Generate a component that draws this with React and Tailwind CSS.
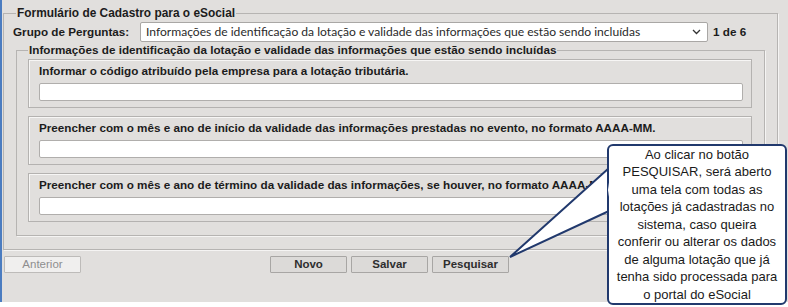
import React from 'react';

// Caixa de pergunta com rótulo e campo de texto
const QuestionBox = ({ label }) => (
  <div className="border border-[#b4b2b0] shadow-[inset_1px_1px_0_#f7f6f5] pl-[10px] pr-[8px] pt-[4px] pb-[6px]">
    <div className="h-[14px] leading-[14px] text-[11.7px] font-bold text-[#1c1c1c] mb-[5px] whitespace-nowrap">{label}</div>
    <div className="h-[18px] bg-white border border-[#b0aeac] rounded-[2px]" />
  </div>
);

const Button = ({ children, disabled, className = '' }) => (
  <div
    className={
      'h-[17px] w-[77px] flex items-center justify-center text-[11.5px] font-bold border rounded-[1px] ' +
      (disabled
        ? 'bg-[#f0efee] border-[#bdbbb9] text-[#8e8e8e] font-normal '
        : 'bg-[#dcdad8] border-[#a8a6a4] text-[#2e2e2e] ') +
      className
    }
  >
    {children}
  </div>
);

export default function App() {
  return (
    <div className="w-[788px] h-[307px] bg-white relative overflow-hidden font-['Liberation_Sans',Arial,sans-serif]">
      {/* Painel cinza */}
      <div className="h-[302px] w-[788px] bg-[#e1dfdd] border-l-2 border-[#4b7cc0] pl-[1px] pt-[6px]">
        <fieldset className="w-[775px] border border-[#b6b4b2] shadow-[1px_1px_0_#f5f4f3] px-[12px] pb-[13px]">
          <legend className="px-[1px] text-[11.9px] font-bold leading-[14px] text-[#1c1c1c]">
            Formulário de Cadastro para o eSocial
          </legend>

          {/* Grupo de perguntas */}
          <div className="flex items-center mt-[2px] -ml-[3px]">
            <span className="w-[127px] text-[11.7px] font-bold text-[#1c1c1c]">Grupo de Perguntas:</span>
            <div className="w-[568px] h-[20px] bg-white border border-[#a9a7a5] rounded-[2px] flex items-center pl-[5px] pr-[6px]">
              <span className="flex-1 text-[12.1px] text-[#2a2a2a] font-['Lato',sans-serif] whitespace-nowrap overflow-hidden">
                Informações de identificação da lotação e validade das informações que estão sendo incluídas
              </span>
              <svg width="9" height="6" viewBox="0 0 9 6">
                <path d="M1 1 L4.5 4.5 L8 1" fill="none" stroke="#333" strokeWidth="1.3" />
              </svg>
            </div>
            <span className="ml-[5px] text-[11.7px] font-bold text-[#1c1c1c]">1 de 6</span>
          </div>

          <fieldset className="mt-[1px] border border-[#b6b4b2] shadow-[1px_1px_0_#f5f4f3] pl-[11px] pr-[12px] pb-[13px]">
            <legend className="px-[1px] text-[11.7px] font-bold leading-[14px] text-[#1c1c1c]">
              Informações de identificação da lotação e validade das informações que estão sendo incluídas
            </legend>
            <div className="flex flex-col gap-[8px] mt-[2px]">
              <QuestionBox label="Informar o código atribuído pela empresa para a lotação tributária." />
              <QuestionBox label="Preencher com o mês e ano de início da validade das informações prestadas no evento, no formato AAAA-MM." />
              <QuestionBox label="Preencher com o mês e ano de término da validade das informações, se houver, no formato AAAA-MM." />
            </div>
          </fieldset>
        </fieldset>

        {/* Botões */}
        <div className="flex items-center mt-[6px] pl-[1px]">
          <Button disabled>Anterior</Button>
          <div className="flex gap-[4px] ml-[189px]">
            <Button>Novo</Button>
            <Button>Salvar</Button>
            <Button>Pesquisar</Button>
          </div>
        </div>
      </div>

      {/* Balão explicativo */}
      <svg className="absolute left-0 top-0 pointer-events-none" width="788" height="307">
        <path d="M609 168 L510 257 L609 211" fill="#ffffff" stroke="#21396d" strokeWidth="2" strokeLinejoin="miter" />
      </svg>
      <div className="absolute left-[607px] top-[144px] w-[180px] h-[161px] bg-white border-2 border-[#21396d] rounded-[6px] flex flex-col items-center justify-center text-[13px] leading-[17.5px] text-[#1a1a1a] text-center">
        <span>Ao clicar no botão</span>
        <span>PESQUISAR, será aberto</span>
        <span>uma tela com todas as</span>
        <span>lotações já cadastradas no</span>
        <span>sistema, caso queira</span>
        <span>conferir ou alterar os dados</span>
        <span>de alguma lotação que já</span>
        <span>tenha sido processada para</span>
        <span>o portal do eSocial</span>
      </div>
      <svg className="absolute left-0 top-0 pointer-events-none" width="788" height="307">
        <path d="M611 168 L608 190 L611 211" fill="#ffffff" stroke="none" />
      </svg>
    </div>
  );
}
